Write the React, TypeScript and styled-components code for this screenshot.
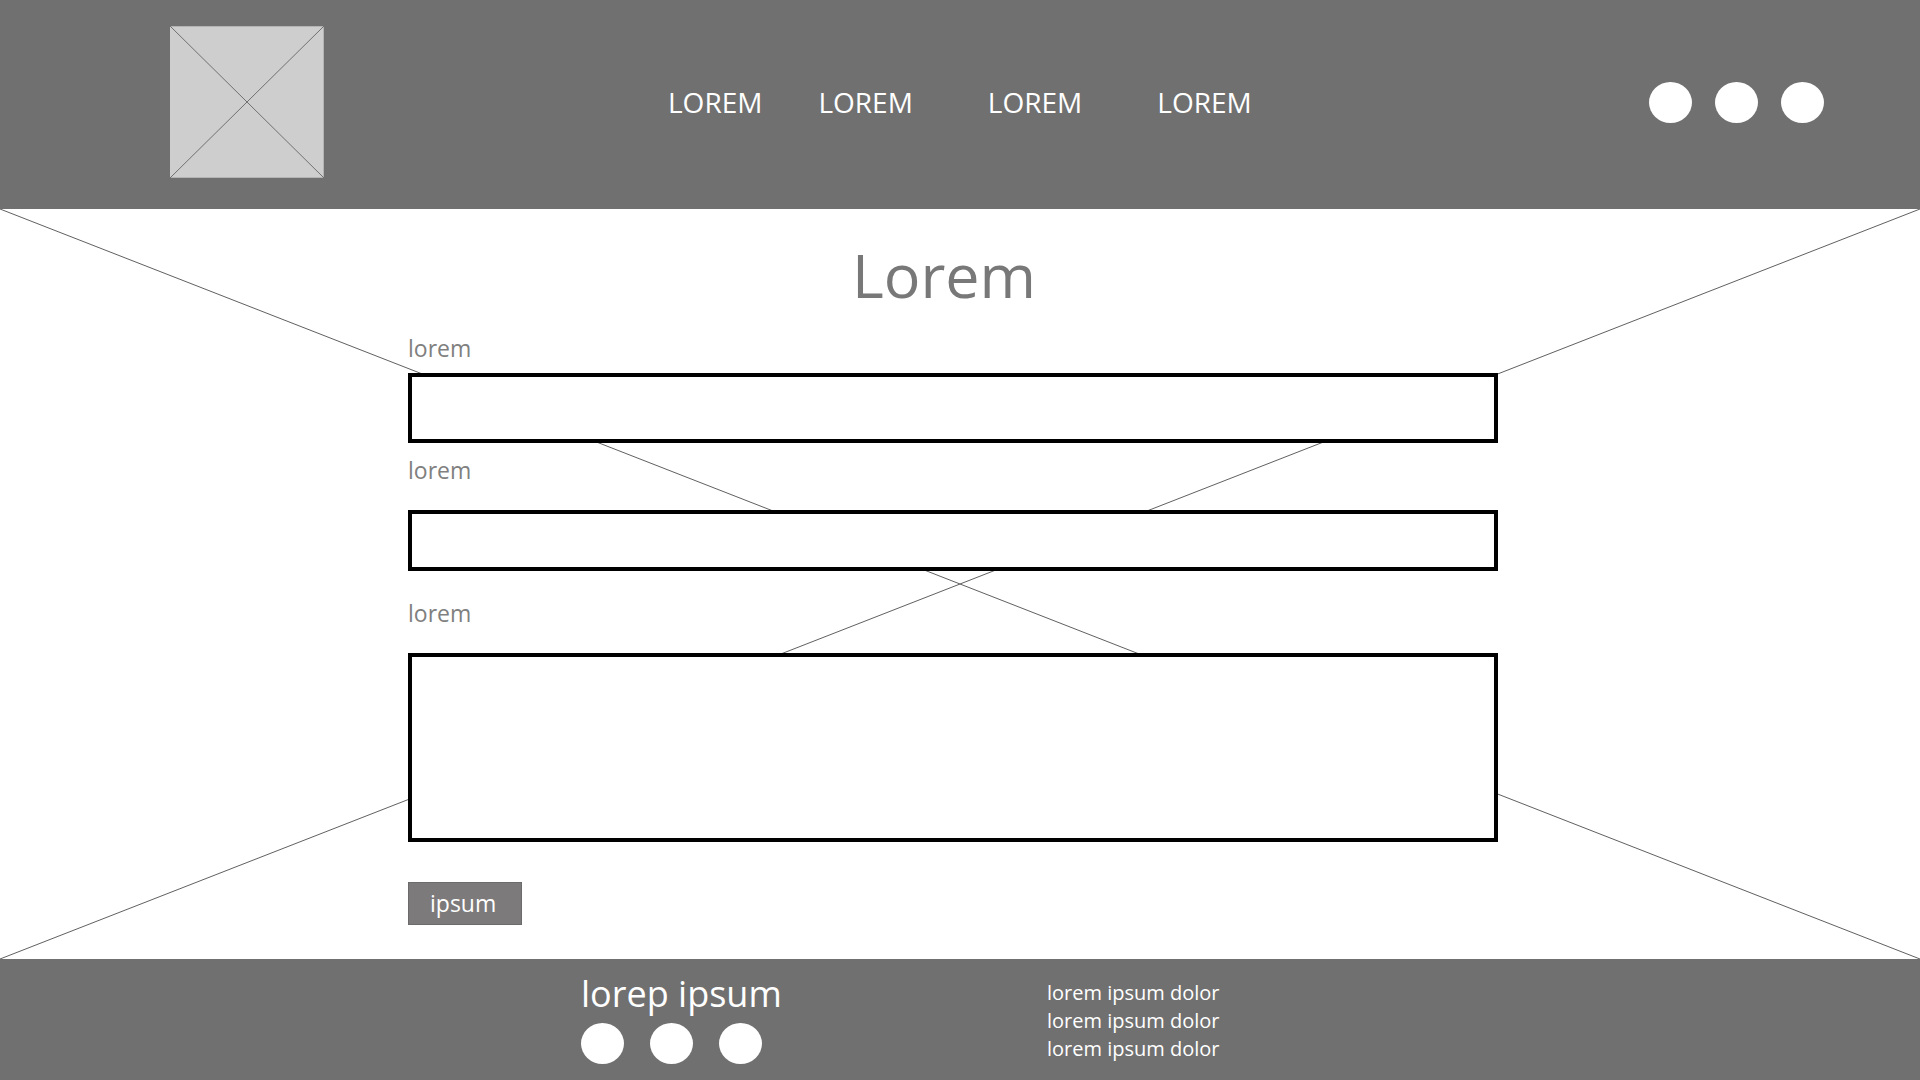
import React from "react";
import styled, { createGlobalStyle } from "styled-components";

const GlobalStyle = createGlobalStyle`
  *, *::before, *::after { box-sizing: border-box; }
  body {
    margin: 0;
    background: #fff;
    font-family: "Open Sans", "Noto Sans", sans-serif;
  }
`;

const Page = styled.div`
  display: flex;
  flex-direction: column;
  min-height: 100vh;
`;

const Header = styled.header`
  display: grid;
  grid-template-columns: 170fr 498fr 981fr 271fr;
  align-items: center;
  padding: 26px 0 31px;
  background: #707070;
`;

const LogoLink = styled.a`
  grid-column: 2;
  display: block;
  width: 154px;
  height: 152px;
`;

const LogoDrawing = styled.svg`
  display: block;
  width: 100%;
  height: 100%;
`;

const Nav = styled.nav`
  display: flex;
`;

const NavLink = styled.a<{ $gap: number }>`
  margin-right: ${({ $gap }) => $gap}px;
  color: #fff;
  font-size: 28px;
  line-height: 40px;
  text-decoration: none;
`;

const DotRow = styled.div<{ $gap: number }>`
  display: flex;
  gap: ${({ $gap }) => $gap}px;
`;

const Dot = styled.a`
  flex: none;
  width: 43px;
  height: 41px;
  border-radius: 50%;
  background: #fff;
`;

const Main = styled.main`
  position: relative;
  flex: 1;
  display: grid;
  grid-template-columns: 408fr 1090fr 422fr;
  align-items: start;
  padding: 26px 0 34px;
`;

const Backdrop = styled.svg`
  position: absolute;
  inset: 0;
  width: 100%;
  height: 100%;
`;

const Form = styled.form`
  position: relative;
  grid-column: 2;
  display: flex;
  flex-direction: column;
  align-items: stretch;
`;

const Title = styled.h1`
  margin: 0 0 17px;
  padding-right: 18px;
  color: #787878;
  font-size: 61px;
  font-weight: 400;
  line-height: 80px;
  text-align: center;
`;

const Label = styled.label<{ $gap: number }>`
  margin-bottom: ${({ $gap }) => $gap}px;
  color: #808080;
  font-size: 23px;
  line-height: 32px;
`;

const TextField = styled.input<{ $height: number; $after: number }>`
  width: 100%;
  height: ${({ $height }) => $height}px;
  margin: 0 0 ${({ $after }) => $after}px;
  padding: 0 16px;
  border: 4px solid #000;
  border-radius: 0;
  background: #fff;
  font: inherit;
  font-size: 23px;
`;

const MessageField = styled.textarea`
  display: block;
  width: 100%;
  height: 189px;
  margin: 0 0 40px;
  padding: 16px;
  border: 4px solid #000;
  border-radius: 0;
  background: #fff;
  font: inherit;
  font-size: 23px;
  resize: none;
`;

const SubmitButton = styled.button`
  align-self: flex-start;
  height: 43px;
  padding: 0 25px 2px 21px;
  border: 1px solid #6c6b6b;
  background: #7d7a7b;
  color: #fff;
  font: inherit;
  font-size: 23px;
  line-height: 32px;
`;

const Footer = styled.footer`
  display: grid;
  grid-template-columns: 581fr 466fr 873fr;
  align-items: start;
  padding: 11px 0 16px;
  background: #707070;
  color: #fff;
`;

const Brand = styled.section`
  grid-column: 2;
`;

const BrandName = styled.h2`
  margin: 0 0 5px;
  font-size: 36px;
  font-weight: 400;
  line-height: 48px;
`;

const InfoList = styled.ul`
  margin: 0;
  padding: 9px 0 0;
  list-style: none;
  font-size: 20px;
  line-height: 28px;
`;

const navGaps = [56, 75, 75, 0];
const dots = [1, 2, 3];
const infoLines = [1, 2, 3];

export default function App() {
  return (
    <>
      <GlobalStyle />
      <Page>
        <Header>
          <LogoLink href="#" aria-label="Logo">
            <LogoDrawing viewBox="0 0 154 152" preserveAspectRatio="none">
              <rect width="154" height="152" fill="#cecece" />
              <path d="M0 .5H154M153.500 0V152M0 151.500H154" stroke="#b4b4b4" fill="none" />
              <path d="M0 0 154 152M154 0 0 152" stroke="#707070" fill="none" />
            </LogoDrawing>
          </LogoLink>
          <Nav>
            {navGaps.map((gap, i) => (
              <NavLink key={i} href="#" $gap={gap}>LOREM</NavLink>
            ))}
          </Nav>
          <DotRow $gap={23}>
            {dots.map((n) => <Dot key={n} href="#" aria-label={`Link ${n}`} />)}
          </DotRow>
        </Header>

        <Main>
          <Backdrop viewBox="0 0 1920 750" preserveAspectRatio="none" aria-hidden="true">
            <path d="M0 0 1920 750M1920 0 0 750" stroke="#606060" fill="none" />
          </Backdrop>
          <Form onSubmit={(e) => e.preventDefault()}>
            <Title>Lorem</Title>
            <Label htmlFor="first" $gap={9}>lorem</Label>
            <TextField id="first" type="text" $height={70} $after={11} />
            <Label htmlFor="second" $gap={24}>lorem</Label>
            <TextField id="second" type="text" $height={61} $after={26} />
            <Label htmlFor="message" $gap={24}>lorem</Label>
            <MessageField id="message" />
            <SubmitButton type="submit">ipsum</SubmitButton>
          </Form>
        </Main>

        <Footer>
          <Brand>
            <BrandName>lorep ipsum</BrandName>
            <DotRow $gap={26}>
              {dots.map((n) => <Dot key={n} href="#" aria-label={`Link ${n}`} />)}
            </DotRow>
          </Brand>
          <InfoList>
            {infoLines.map((n) => <li key={n}>lorem ipsum dolor</li>)}
          </InfoList>
        </Footer>
      </Page>
    </>
  );
}
